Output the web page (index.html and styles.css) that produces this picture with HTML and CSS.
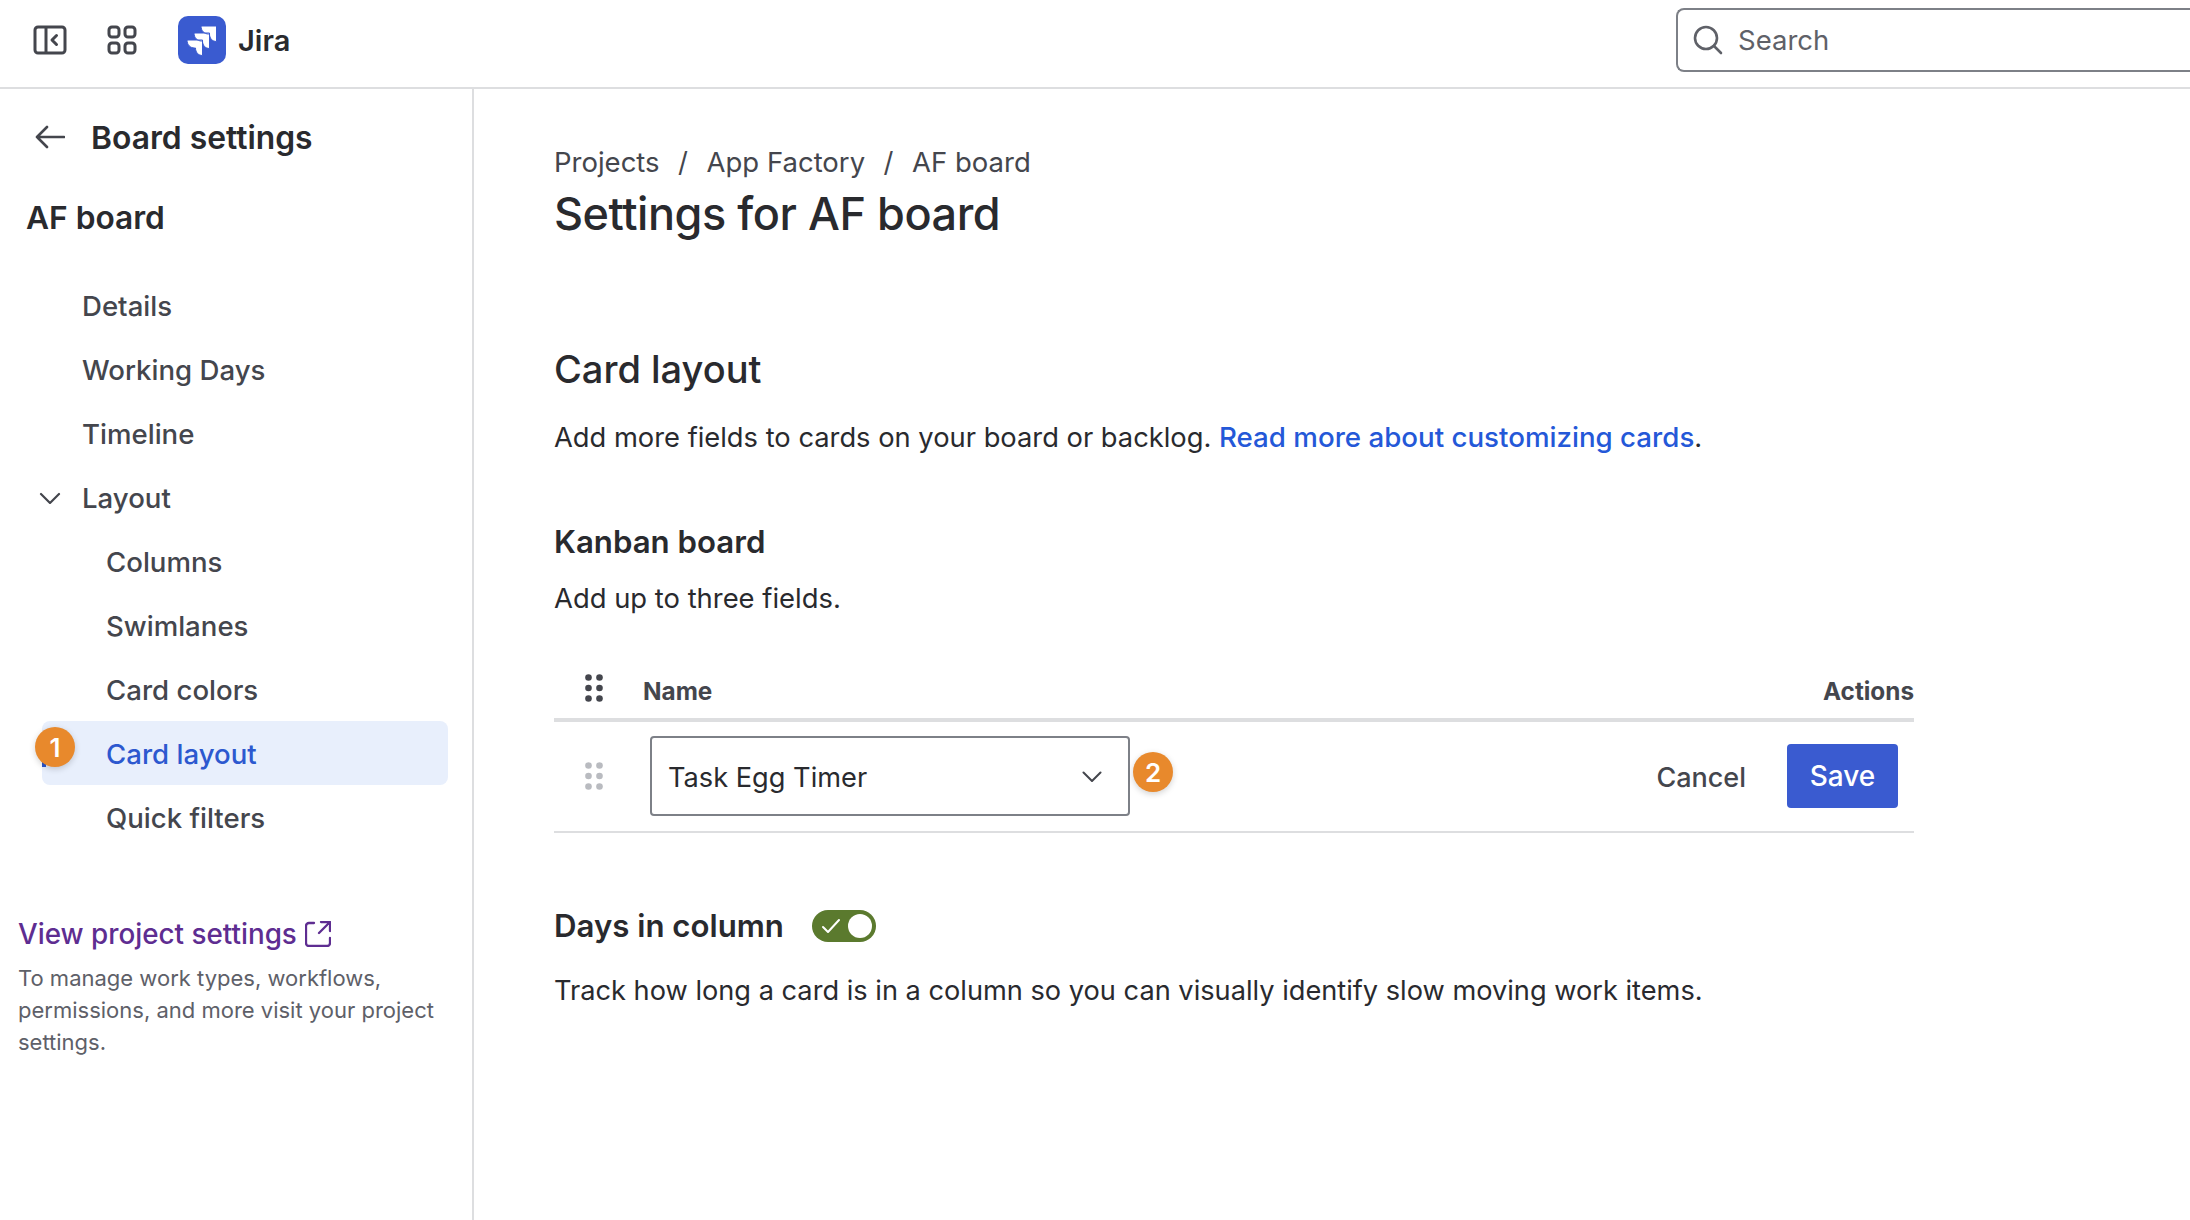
FILE: index.html
```html
<!DOCTYPE html>
<html lang="en">
<head>
<meta charset="utf-8">
<title>Settings for AF board</title>
<link rel="stylesheet" href="styles.css">
</head>
<body>
<header class="topbar">
  <svg class="ic-panel" width="34" height="30" viewBox="0 0 34 30" fill="none" stroke="#44464d" stroke-width="3"><rect x="2" y="2" width="30" height="26" rx="3"/><path d="M13 2v26"/><path d="M23.500 10.500 19 15l4.500 4.500" stroke-linecap="round" stroke-linejoin="round"/></svg>
  <svg class="ic-apps" width="30" height="30" viewBox="0 0 30 30" fill="none" stroke="#44464d" stroke-width="3"><rect x="2" y="2" width="10" height="10" rx="3"/><rect x="18" y="2" width="10" height="10" rx="3"/><rect x="2" y="18" width="10" height="10" rx="3"/><rect x="18" y="18" width="10" height="10" rx="3"/></svg>
  <svg class="logo" width="48" height="48" viewBox="0 0 48 48"><rect width="48" height="48" rx="10" fill="#3a5bd0"/><path fill="#fff" stroke="#3a5bd0" stroke-width="1" d="M23 10h15.500v15.500c-4 0-7-3-7-7.500h-1c-4 0-7.500-3-7.500-8zM16 17h15.500v15.500c-4 0-7-3-7-7.500h-1c-4 0-7.500-3-7.500-8zM9 24h15.500v15.500c-4 0-7-3-7-7.500h-1c-4 0-7.500-3-7.500-8z"/></svg>
  <span class="brand">Jira</span>
  <div class="search">
    <svg width="30" height="30" viewBox="0 0 30 30" fill="none" stroke="#5f6168" stroke-width="2.600" stroke-linecap="round"><circle cx="13" cy="13" r="11"/><path d="M21 21l7 7"/></svg>
    <span>Search</span>
  </div>
</header>
<div class="shell">
  <aside class="sidebar">
    <div class="side-title">
      <svg width="30" height="24" viewBox="0 0 30 24" fill="none" stroke="#44464d" stroke-width="2.600" stroke-linecap="round" stroke-linejoin="round"><path d="M29 12H2M12 2 2 12l10 10"/></svg>
      <span>Board settings</span>
    </div>
    <div class="board-name">AF board</div>
    <nav class="nav">
      <a class="nav-item">Details</a>
      <a class="nav-item">Working Days</a>
      <a class="nav-item">Timeline</a>
      <a class="nav-item has-chevron">
        <svg width="22" height="12" viewBox="0 0 22 12" fill="none" stroke="#44464d" stroke-width="2.200" stroke-linecap="round" stroke-linejoin="round"><path d="M2 2l9 9 9-9"/></svg>
        Layout
      </a>
      <a class="nav-item sub">Columns</a>
      <a class="nav-item sub">Swimlanes</a>
      <a class="nav-item sub">Card colors</a>
      <a class="nav-item sub active"><span class="badge badge-one">1</span>Card layout</a>
      <a class="nav-item sub">Quick filters</a>
    </nav>
    <a class="project-link">View project settings
      <svg width="26" height="26" viewBox="0 0 26 26" fill="none" stroke="#5e2d91" stroke-width="2.300" stroke-linecap="round" stroke-linejoin="round"><path d="M9 2H4a3 3 0 0 0-3 3v17a3 3 0 0 0 3 3h18a3 3 0 0 0 3-3v-5M14 12 25 1M16 1h9v9"/></svg>
    </a>
    <p class="project-note">To manage work types, workflows, permissions, and more visit your project settings.</p>
  </aside>
  <main class="main">
    <div class="crumbs"><span>Projects</span><i>/</i><span>App Factory</span><i>/</i><span>AF board</span></div>
    <h1>Settings for AF board</h1>
    <h2>Card layout</h2>
    <p class="intro">Add more fields to cards on your board or backlog. <a>Read more about customizing cards</a>.</p>
    <h3 class="kanban">Kanban board</h3>
    <p class="hint">Add up to three fields.</p>
    <div class="table">
      <div class="thead">
        <svg class="grip" width="18" height="28" viewBox="0 0 18 28" fill="#44464d"><circle cx="3.500" cy="3.500" r="3.300"/><circle cx="14.500" cy="3.500" r="3.300"/><circle cx="3.500" cy="14" r="3.300"/><circle cx="14.500" cy="14" r="3.300"/><circle cx="3.500" cy="24.500" r="3.300"/><circle cx="14.500" cy="24.500" r="3.300"/></svg>
        <span class="th-name">Name</span>
        <span class="th-actions">Actions</span>
      </div>
      <div class="row">
        <svg class="grip" width="18" height="28" viewBox="0 0 18 28" fill="#b9bbc0"><circle cx="3.500" cy="3.500" r="3.300"/><circle cx="14.500" cy="3.500" r="3.300"/><circle cx="3.500" cy="14" r="3.300"/><circle cx="14.500" cy="14" r="3.300"/><circle cx="3.500" cy="24.500" r="3.300"/><circle cx="14.500" cy="24.500" r="3.300"/></svg>
        <div class="select">
          <span class="select-value">Task Egg Timer</span>
          <svg width="20" height="11" viewBox="0 0 20 11" fill="none" stroke="#44464d" stroke-width="2" stroke-linecap="round" stroke-linejoin="round"><path d="M1.500 1.500l8.500 8.500 8.500-8.500"/></svg>
          <span class="badge badge-two">2</span>
        </div>
        <button class="btn-cancel">Cancel</button>
        <button class="btn-save">Save</button>
      </div>
    </div>
    <div class="days">
      <h3>Days in column</h3>
      <div class="toggle">
        <svg width="20" height="16" viewBox="0 0 20 16" fill="none" stroke="#fff" stroke-width="2" stroke-linecap="round" stroke-linejoin="round"><path d="M2 9l5 5L18 2"/></svg>
        <span class="knob"></span>
      </div>
    </div>
    <p class="track">Track how long a card is in a column so you can visually identify slow moving work items.</p>
  </main>
</div>
</body>
</html>
```
FILE: styles.css
```css
* { box-sizing: border-box; }
html, body { margin: 0; height: 100%; }
body {
  font-family: Inter, "Liberation Sans", sans-serif;
  color: #292a2e;
  background: #fff;
  overflow: hidden;
}
.topbar {
  height: 89px;
  border-bottom: 2px solid #dddee0;
  display: flex;
  align-items: center;
  padding-left: 33px;
  padding-bottom: 7px;
}
.ic-apps { margin-left: 40px; }
.logo { margin-left: 41px; }
.brand { margin-left: 12px; font-size: 29px; font-weight: 600; }
.search {
  margin-left: auto;
  width: 514px;
  height: 64px;
  border: 2px solid #7d8087;
  border-right: 0;
  border-radius: 8px 0 0 8px;
  display: flex;
  align-items: center;
  padding-left: 15px;
  gap: 15px;
  font-size: 27.500px;
  color: #5f6168;
}
.shell { display: flex; height: 1131px; }
.sidebar {
  width: 474px;
  flex: none;
  border-right: 2px solid #dddee0;
  padding: 0 24px 0 0;
}
.side-title {
  height: 96px;
  display: flex;
  align-items: center;
  padding-left: 35px;
  gap: 26px;
  font-size: 31.800px;
  font-weight: 600;
}
.board-name {
  margin-top: 9px;
  padding-left: 26px;
  font-size: 31.700px;
  font-weight: 600;
  line-height: 48px;
}
.nav { margin-top: 31px; display: flex; flex-direction: column; }
.nav-item {
  height: 64px;
  position: relative;
  display: flex;
  align-items: center;
  padding: 2px 0 0 82px;
  font-size: 27.600px;
  font-weight: 500;
  color: #44464d;
  border-radius: 8px;
}
.has-chevron svg { position: absolute; left: 39px; top: 27px; }
.nav-item.sub { padding-left: 106px; }
.nav-item.active {
  margin-left: 42px;
  padding-left: 64px;
  background: #e8effc;
  color: #2c58cf;
}
.nav-item.active::before {
  content: "";
  position: absolute;
  left: 0;
  top: 20px;
  width: 4px;
  height: 26px;
  background: #2c58cf;
}
.badge {
  position: absolute;
  width: 40px;
  height: 40px;
  border-radius: 50%;
  background: #e8892c;
  color: #fff;
  font-size: 26px;
  font-weight: 600;
  display: flex;
  align-items: center;
  justify-content: center;
  box-shadow: 0 2px 6px rgba(0, 0, 0, .18);
}
.badge-one { left: -7px; top: 6px; z-index: 1; }
.badge-two { left: 481px; top: 14px; }
.project-link {
  margin: 65px 0 0 18px;
  display: flex;
  align-items: center;
  gap: 8px;
  font-size: 27.800px;
  font-weight: 500;
  color: #5e2d91;
  line-height: 40px;
}
.project-note {
  margin: 8px 0 0 18px;
  font-size: 22px;
  line-height: 32px;
  color: #5e6068;
}
.main { flex: 1; padding: 0 0 0 80px; }
.crumbs {
  margin-top: 53px;
  display: flex;
  gap: 18.500px;
  font-size: 27.500px;
  line-height: 40px;
  color: #44464d;
}
.crumbs i { font-style: normal; }
h1 {
  margin: 4px 0 0;
  font-size: 45px;
  font-weight: 500;
  letter-spacing: -0.01em;
  line-height: 56px;
}
h2 {
  margin: 99px 0 0;
  font-size: 38px;
  font-weight: 500;
  line-height: 56px;
}
.intro {
  margin: 21px 0 0;
  height: 40px;
  font-size: 27.300px;
  line-height: 40px;
}
.intro a { color: #2458d8; font-size: 27.700px; font-weight: 500; line-height: 1; }
h3 {
  margin: 0;
  font-size: 31.200px;
  font-weight: 600;
  line-height: 40px;
}
.kanban { margin-top: 64px; }
.hint { margin: 16px 0 0; font-size: 27.400px; line-height: 40px; }
.table { width: 1360px; margin-top: 40px; }
.thead {
  height: 64px;
  border-bottom: 4px solid #dddee0;
  display: flex;
  align-items: center;
  padding: 6px 0 0 31px;
  font-size: 24.300px;
  font-weight: 700;
  color: #44464d;
}
.thead .grip { margin-top: -6px; }
.th-name { margin-left: 40px; }
.th-actions { margin-left: auto; }
.row {
  height: 111px;
  border-bottom: 2px solid #dddee0;
  display: flex;
  align-items: center;
  padding: 0 16px 1px 31px;
}
.select {
  position: relative;
  margin-left: 47px;
  width: 480px;
  height: 80px;
  border: 2px solid #7d8087;
  border-radius: 4px;
  display: flex;
  align-items: center;
  justify-content: space-between;
  padding: 0 26px 0 16px;
  font-size: 27.200px;
}
.select-value { padding-top: 2px; }
.btn-cancel, .btn-save {
  font: 500 27px Inter, "Liberation Sans", sans-serif;
  border: 0;
  background: none;
  padding: 0;
}
.btn-cancel { margin-left: auto; padding-top: 2px; color: #44464d; }
.btn-save {
  font-size: 28px;
  margin-left: 41px;
  width: 111px;
  height: 64px;
  background: #3a5bd0;
  color: #fff;
  border-radius: 4px;
}
.days { margin-top: 73px; display: flex; align-items: center; gap: 28px; }
.toggle {
  width: 64px;
  height: 32px;
  border-radius: 16px;
  background: #5b7a2e;
  display: flex;
  align-items: center;
  justify-content: space-between;
  padding: 0 4px 0 9px;
}
.knob { width: 24px; height: 24px; border-radius: 50%; background: #fff; }
.track { margin: 25px 0 0; font-size: 27.200px; line-height: 40px; }
```
